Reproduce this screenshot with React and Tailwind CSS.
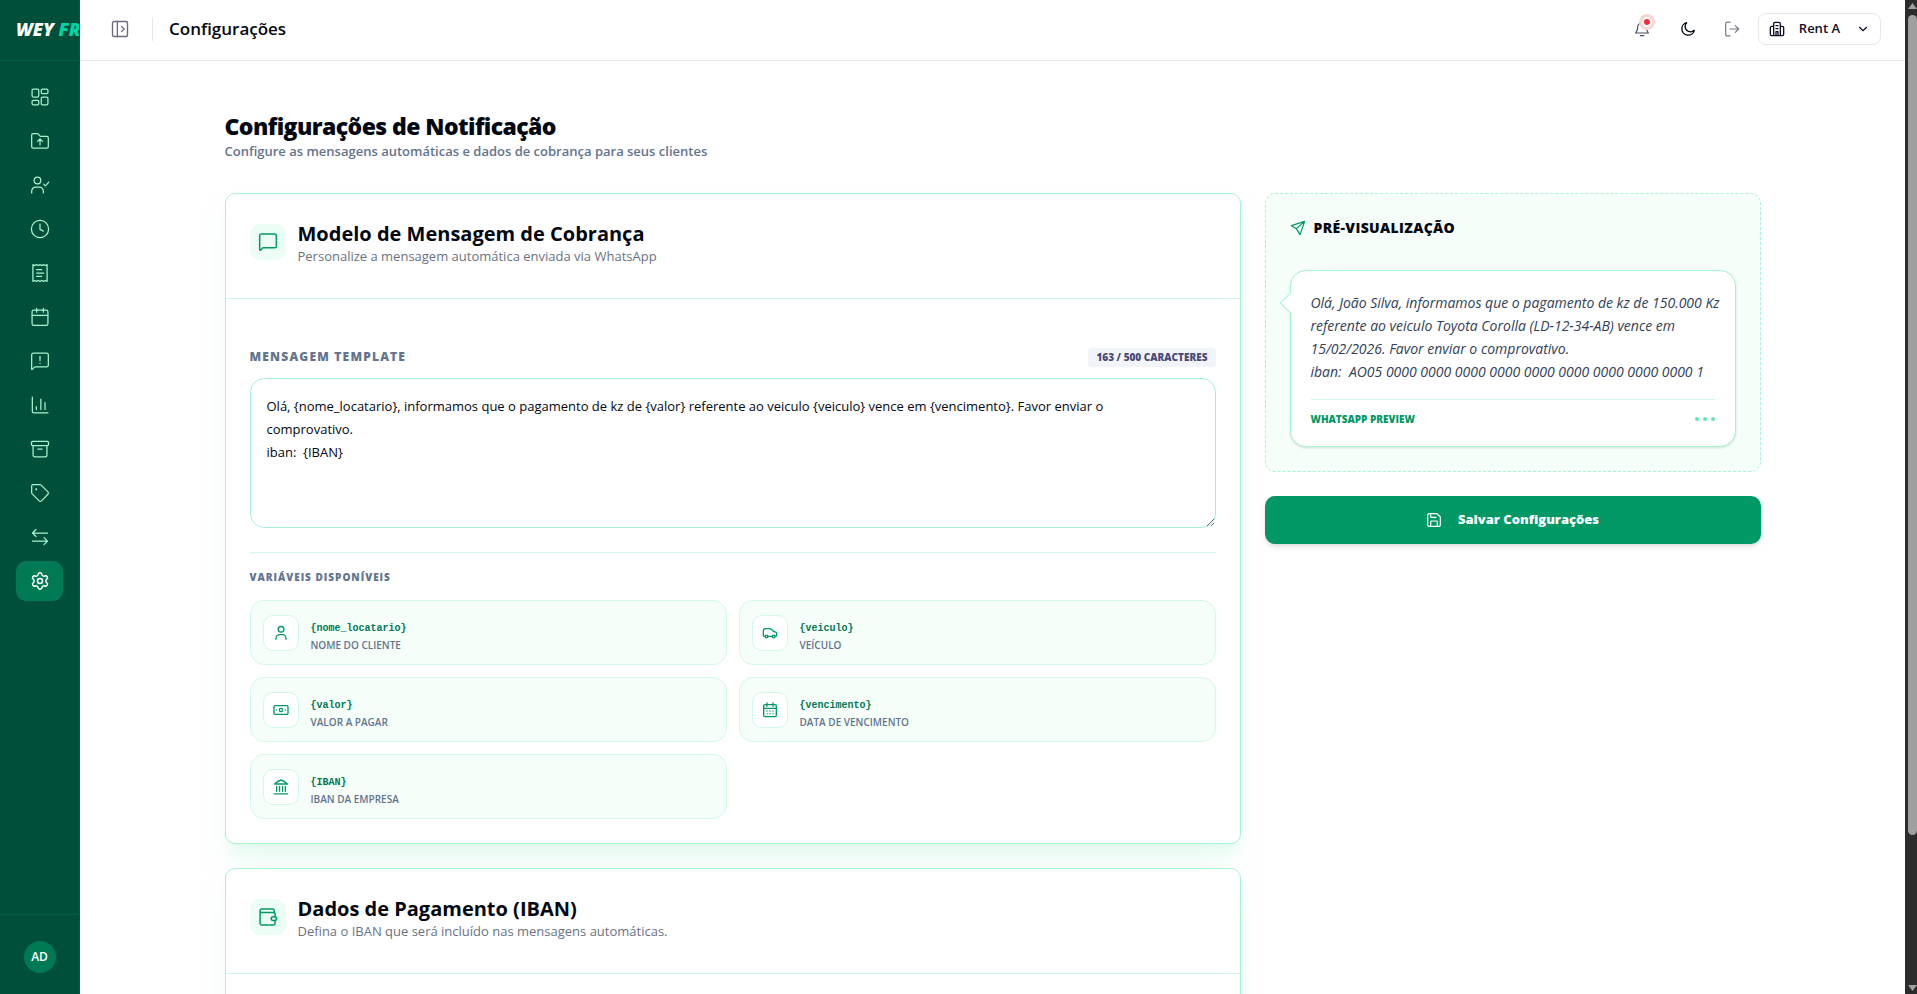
import React, { useState } from "react";
import { Settings, ChevronDown } from "lucide-react";

function Icon({ size = 20, stroke = 1.5, className = "", children }) {
  return (
    <svg
      width={size}
      height={size}
      viewBox="0 0 24 24"
      fill="none"
      stroke="currentColor"
      strokeWidth={stroke}
      strokeLinecap="round"
      strokeLinejoin="round"
      className={"shrink-0 " + className}
      aria-hidden="true"
    >
      {children}
    </svg>
  );
}

const dashboard = (
  <>
    <rect x="2.5" y="2.5" width="8" height="9.5" rx="1.4" />
    <rect x="13.5" y="2.5" width="8" height="5.5" rx="1.4" />
    <rect x="2.5" y="16" width="8" height="5.5" rx="1.4" />
    <rect x="13.5" y="12" width="8" height="9.5" rx="1.4" />
  </>
);
const folderUp = (
  <>
    <path d="M2 18.500V5a2 2 0 0 1 2-2h4.600a2 2 0 0 1 1.600.8L11.600 5.700a2 2 0 0 0 1.600.8H20a2 2 0 0 1 2 2v10a2 2 0 0 1-2 2H4a2 2 0 0 1-2-2Z" />
    <path d="M12 16.500v-6M9 12.500l3-3 3 3" />
  </>
);
const userCheck = (
  <>
    <circle cx="9" cy="6.500" r="4" />
    <path d="M2 21.500V19.500a5 5 0 0 1 5-5h4a5 5 0 0 1 5 5v2M16.500 11l2 2 4-4.500" />
  </>
);
const clock = (
  <>
    <circle cx="12" cy="12" r="10.300" />
    <path d="M12 6v6.500l4 2" />
  </>
);
const receipt = (
  <>
    <path d="M3.500 2l2.100 1 2.150-1 2.150 1L12 2l2.100 1 2.150-1 2.150 1 2.100-1v20l-2.100-1-2.150 1-2.150-1-2.100 1-2.100-1-2.150 1-2.150-1-2.100 1Z" />
    <path d="M8 8h6M8 12h8.500M8 16h6" />
  </>
);
const calendar = (
  <>
    <rect x="2.500" y="3.700" width="19" height="18.300" rx="2" />
    <path d="M8 1.700v4.500M16 1.700v4.500M2.500 10h19" />
  </>
);
const warning = (
  <>
    <path d="M2 22V4.500a2 2 0 0 1 2-2h16a2 2 0 0 1 2 2V17a2 2 0 0 1-2 2H6.500a2 2 0 0 0-1.500.7L3.200 21.700Q2.500 22.300 2 22Z" />
    <path d="M12 6.500v5M12 14.800v.1" />
  </>
);
const chart = <path d="M2.800 2.500v17a2 2 0 0 0 2 2h16.700M7.600 14v3.500M13 5v12.500M18 9v8.500" />;
const archive = (
  <>
    <rect x="1.800" y="2.800" width="20.400" height="5.200" rx="1.300" />
    <path d="M3.700 8v11.500a2 2 0 0 0 2 2h12.600a2 2 0 0 0 2-2V8M9.500 12h5" />
  </>
);
const tag = (
  <>
    <path d="M2 4a2 2 0 0 1 2-2h8a2 2 0 0 1 1.400.6l8.100 8.100a2 2 0 0 1 0 2.800l-7.700 7.900a2 2 0 0 1-2.800 0L2.600 13A2 2 0 0 1 2 11.600Z" />
    <path d="M7.500 7.500v.1" strokeWidth="2.500" />
  </>
);
const transfer = <path d="M21 7.200H3.300M7.200 3L3 7.200l4.200 4.200M3 17h17.700M16.800 12.800L21 17l-4.200 4.200" />;
const message = (
  <path d="M2 21.500V4.500a2 2 0 0 1 2-2h16a2 2 0 0 1 2 2V17a2 2 0 0 1-2 2H6.500a2 2 0 0 0-1.500.7L3.200 21.500Q2.500 22.200 2 21.500Z" />
);
const wallet = (
  <>
    <path d="M20.500 11.500V8.500a2 2 0 0 0-2-2H4.500a2 2 0 0 1 0-4H17.500a2 2 0 0 1 2 2V6.700M2.500 4.500v15a2 2 0 0 0 2 2h14a2 2 0 0 0 2-2V16.200" />
    <rect x="15.800" y="11.600" width="6.500" height="4.600" rx="2.300" />
  </>
);
const user = (
  <>
    <circle cx="12" cy="6.500" r="4.300" />
    <path d="M4.500 21.500V20a5.500 5.500 0 0 1 5.500-5.500h4A5.500 5.500 0 0 1 19.500 20v1.500" />
  </>
);
const car = (
  <>
    <path d="M4.500 17H3.500a1.500 1.500 0 0 1-1.500-1.500V9a3.500 3.500 0 0 1 3.500-3.500h5.600a5 5 0 0 1 3.300 1.200L18 10l2.500.7a2 2 0 0 1 1.500 2V15.500a1.500 1.500 0 0 1-1.500 1.500H20M9 17h6.500" />
    <circle cx="6.800" cy="17.200" r="2" />
    <circle cx="17.500" cy="17.200" r="2" />
  </>
);
const banknote = (
  <>
    <rect x="1.500" y="5.500" width="21" height="13" rx="1.500" />
    <circle cx="12" cy="12" r="2.500" />
    <path d="M5.500 12v.1M18.500 12v.1" />
  </>
);
const dueDate = (
  <>
    <rect x="2.500" y="4" width="19" height="18" rx="2" />
    <path d="M7.500 1.500v5M16.500 1.500v5M2.500 9.500h19M7.500 13.500h.1M12 13.500h.1M16.500 13.500h.1M7.500 17.500h.1M12 17.500h.1M16.500 17.500h.1" />
  </>
);
const bank = (
  <path d="M2.500 7.500Q7 3 12 1.500 17 3 21.500 7.500ZM5.500 11v7.500M9.800 11v7.500M14.200 11v7.500M18.500 11v7.500M2 22.300h20" />
);
const send = <path d="M22 2L2 8.500l7.500 4.500L15 22 22 2ZM9.500 13 22 2" />;

const NAV = [
  ["Painel", dashboard],
  ["Pastas", folderUp],
  ["Clientes", userCheck],
  ["Histórico", clock],
  ["Recibos", receipt],
  ["Agenda", calendar],
  ["Alertas", warning],
  ["Relatórios", chart],
  ["Arquivo", archive],
  ["Etiquetas", tag],
  ["Transferências", transfer],
];

const VARIABLES = [
  ["{nome_locatario}", "Nome do cliente", user],
  ["{veiculo}", "Veículo", car],
  ["{valor}", "Valor a pagar", banknote],
  ["{vencimento}", "Data de vencimento", dueDate],
  ["{IBAN}", "IBAN da empresa", bank],
];

const TEMPLATE =
  "Olá, {nome_locatario}, informamos que o pagamento de kz de {valor} referente ao veiculo {veiculo} vence em {vencimento}. Favor enviar o comprovativo.\niban:  {IBAN}";

function Sidebar() {
  return (
    <aside className="flex w-20 shrink-0 flex-col border-r border-[#005a42] bg-[#004f3b]">
      <div className="flex h-[61px] items-center overflow-hidden border-b border-[#006045] pb-0.5 pl-4">
        <span className="text-lg font-extrabold whitespace-nowrap text-white italic">
          WEY <span className="text-[#00d5a5]">FR</span>
        </span>
      </div>
      <nav className="flex flex-1 flex-col gap-1 px-4 pt-4" aria-label="Principal">
        {NAV.map(([label, shape]) => (
          <a key={label} href="#" aria-label={label} className="flex h-10 items-center justify-center text-[#a4f4cf]">
            <Icon>{shape}</Icon>
          </a>
        ))}
        <a
          href="#"
          aria-label="Configurações"
          className="flex h-10 items-center justify-center rounded-[10px] bg-[#007a55] text-white"
        >
          <Settings size={20} strokeWidth={1.8} />
        </a>
      </nav>
      <div className="flex h-20 items-center justify-center border-t border-[#006045] pt-1">
        <button className="flex size-8 items-center justify-center rounded-full bg-[#007a55] text-xs font-semibold text-white">
          AD
        </button>
      </div>
    </aside>
  );
}

function Header() {
  return (
    <header className="flex h-[61px] shrink-0 items-center border-b border-gray-200 pr-6 pb-0.5 pl-[31px]">
      <button aria-label="Alternar menu" className="text-[#6c6880]">
        <Icon size={18} stroke={1.8}>
          <rect x="2" y="2" width="20" height="20" rx="2" />
          <path d="M8.500 2v20M14 8.500l3.500 3.500-3.500 3.500" />
        </Icon>
      </button>
      <span className="mx-4 ml-[23px] h-6 w-px bg-gray-200" />
      <span className="text-[17px] font-semibold text-[#030712]">Configurações</span>
      <div className="ml-auto flex items-center">
        <button aria-label="Notificações" className="relative mr-[30px] text-[#4a4866]">
          <Icon size={16} stroke={1.8}>
            <path d="M4.500 14.500Q5.500 12 5.500 9.500a6.500 6.500 0 0 1 13 0Q18.500 13 21.500 18H2.500L4.500 14.500M9.500 22h5" />
          </Icon>
          <span className="absolute -top-[7px] left-[5px] flex size-4 items-center justify-center rounded-full bg-[#fdd5cf]">
            <span className="size-[10px] rounded-full border-2 border-white bg-[#fb2c36]" />
          </span>
        </button>
        <button aria-label="Tema escuro" className="mr-7 text-[#030712]">
          <Icon size={16} stroke={2}>
            <path d="M21.500 14A9.500 9.500 0 1 1 10 2.500a8 8 0 0 0 11.500 11.500Z" />
          </Icon>
        </button>
        <button aria-label="Sair" className="mr-[18px] text-[#777683]">
          <Icon size={16} stroke={1.8}>
            <path d="M9 1.800H4.500a2 2 0 0 0-2 2v16.400a2 2 0 0 0 2 2H9M9 12h13M17 7l5 5-5 5" />
          </Icon>
        </button>
        <button className="flex h-8 items-center rounded-lg border border-gray-200 px-[10px] text-[13px] font-semibold text-[#0f0f2a]">
          <Icon size={16} stroke={2}>
            <path d="M7 22V4a2 2 0 0 1 2-2h6a2 2 0 0 1 2 2v18M7 8H4a2 2 0 0 0-2 2v10a2 2 0 0 0 2 2h16a2 2 0 0 0 2-2V10a2 2 0 0 0-2-2h-3M10.500 7h3M10.500 11.500h3M10.500 22v-6h3v6" />
          </Icon>
          <span className="mr-4 ml-3.5">Rent A</span>
          <ChevronDown size={14} />
        </button>
      </div>
    </header>
  );
}

function CardHeader({ icon, title, text }) {
  return (
    <div className="flex h-[105px] items-start gap-3 border-b border-[#d0fae5] px-6 pt-7">
      <span className="mt-0.5 flex size-9 items-center justify-center rounded-[10px] bg-[#ecfdf5] text-[#009966]">
        <Icon size={20} stroke={1.8}>
          {icon}
        </Icon>
      </span>
      <div>
        <h2 className="text-xl leading-6 font-bold text-[#030712]">{title}</h2>
        <p className="text-[13px] leading-5 text-gray-500">{text}</p>
      </div>
    </div>
  );
}

export default function App() {
  const [template, setTemplate] = useState(TEMPLATE);
  return (
    <div className="flex h-screen overflow-hidden bg-white font-['Open_Sans','Noto_Sans',sans-serif] text-[#030712]">
      <Sidebar />
      <div className="flex min-w-0 flex-1 flex-col">
        <Header />
        <main className="flex-1 overflow-hidden px-8 pt-[50px]">
          <div className="mx-auto max-w-[1536px]">
            <h1 className="text-[23px] leading-[30px] font-extrabold tracking-tight">Configurações de Notificação</h1>
            <p className="text-[13px] leading-5 font-semibold text-[#62748e]">
              Configure as mensagens automáticas e dados de cobrança para seus clientes
            </p>
            <div className="mt-8 grid grid-cols-3 items-start gap-6">
              <div className="col-span-2 flex flex-col gap-6">
                <section className="rounded-[10px] border border-[#a4f4cf] bg-white shadow-[0_20px_25px_-5px_#d0fae580,0_8px_10px_-6px_#d0fae580]">
                  <CardHeader
                    icon={message}
                    title="Modelo de Mensagem de Cobrança"
                    text="Personalize a mensagem automática enviada via WhatsApp"
                  />
                  <div className="px-6 pt-12 pb-6">
                    <div className="mb-[11px] flex h-5 items-center justify-between">
                      <label
                        htmlFor="template"
                        className="text-xs font-extrabold tracking-widest text-[#62748e] uppercase"
                      >
                        Mensagem template
                      </label>
                      <span className="rounded bg-[#f1f5f9] px-2 text-[10px] leading-[19px] font-extrabold text-[#4a4a78]">
                        {template.length} / 500 CARACTERES
                      </span>
                    </div>
                    <textarea
                      id="template"
                      value={template}
                      onChange={(e) => setTemplate(e.target.value)}
                      className="block h-[150px] w-full rounded-[14px] border border-[#a4f4cf] bg-white py-4 pr-8 pl-4 text-[13px] leading-[23px] outline-none"
                    />
                    <div className="mt-6 border-t border-[#d0fae5] pt-4">
                      <h3 className="mb-[15px] text-[10px] leading-4 font-extrabold tracking-widest text-[#62748e] uppercase">
                        Variáveis disponíveis
                      </h3>
                      <div className="grid grid-cols-2 gap-3">
                        {VARIABLES.map(([code, label, shape]) => (
                          <button
                            key={code}
                            className="flex h-[65px] items-center gap-3 rounded-[14px] border border-[#d0fae5] bg-[#f6fefa] px-3 text-left"
                          >
                            <span className="flex size-9 items-center justify-center rounded-[10px] border border-[#d0fae5] bg-white text-[#009966]">
                              <Icon size={16} stroke={2}>
                                {shape}
                              </Icon>
                            </span>
                            <span className="flex flex-col pt-2">
                              <code className="font-['Liberation_Mono',monospace] text-[10px] leading-4 font-bold text-[#007a55]">
                                {code}
                              </code>
                              <span className="text-[10px] leading-4 font-semibold text-[#62748e] uppercase">{label}</span>
                            </span>
                          </button>
                        ))}
                      </div>
                    </div>
                  </div>
                </section>
                <section className="rounded-[10px] border border-[#a4f4cf] bg-white shadow-[0_20px_25px_-5px_#d0fae580,0_8px_10px_-6px_#d0fae580]">
                  <CardHeader
                    icon={wallet}
                    title="Dados de Pagamento (IBAN)"
                    text="Defina o IBAN que será incluído nas mensagens automáticas."
                  />
                  <div className="h-40" />
                </section>
              </div>

              <div className="flex flex-col gap-6">
                <section className="rounded-[10px] border border-dashed border-[#a4f4cf] bg-[#f6fefa] p-6">
                  <h2 className="mb-8 flex h-5 items-center gap-2 text-sm font-extrabold tracking-wide uppercase">
                    <Icon size={16} stroke={1.8} className="text-[#009966]">
                      {send}
                    </Icon>
                    Pré-visualização
                  </h2>
                  <div className="relative rounded-2xl border border-[#a4f4cf] bg-white px-5 py-5 shadow-sm">
                    <span className="absolute top-6 -left-2 size-4 rotate-45 border-b border-l border-[#a4f4cf] bg-white" />
                    <p className="relative -mr-2 text-sm leading-[23px] whitespace-pre-wrap text-[#314158] italic">
                      {
                        "Olá, João Silva, informamos que o pagamento de kz de 150.000 Kz referente ao veiculo Toyota Corolla (LD-12-34-AB) vence em 15/02/2026. Favor enviar o comprovativo.\niban:  AO05 0000 0000 0000 0000 0000 0000 0000 0000 0000 1"
                      }
                    </p>
                    <div className="mt-4 flex items-center justify-between border-t border-[#d0fae5] pt-3">
                      <span className="text-[10px] leading-[14px] font-extrabold text-[#009966]">WHATSAPP PREVIEW</span>
                      <span className="flex gap-1">
                        <span className="size-1 rounded-full bg-[#5ee9b5]" />
                        <span className="size-1 rounded-full bg-[#5ee9b5]" />
                        <span className="size-1 rounded-full bg-[#5ee9b5]" />
                      </span>
                    </div>
                  </div>
                </section>
                <button className="flex h-12 items-center justify-center gap-4 rounded-[10px] bg-[#009966] text-[13px] font-extrabold text-white shadow-md">
                  <Icon size={16} stroke={1.8}>
                    <path d="M2.500 4.500a2 2 0 0 1 2-2H16.500L21.500 7.500V19.500a2 2 0 0 1-2 2h-15a2 2 0 0 1-2-2ZM7 21.500V14.500a1 1 0 0 1 1-1h8a1 1 0 0 1 1 1v7M7 2.500V7a1 1 0 0 0 1 1h7" />
                  </Icon>
                  Salvar Configurações
                </button>
              </div>
            </div>
          </div>
        </main>
      </div>
      <div className="flex w-3 shrink-0 flex-col items-center bg-[#2c2c2c] py-[3px] pl-[3px]" aria-hidden="true">
        <svg width="9" height="6" viewBox="0 0 9 6" fill="#9f9f9f">
          <path d="M4.500 0 9 6H0Z" />
        </svg>
        <div className="mt-[6px] h-[83%] w-[9px] rounded-full bg-[#9f9f9f]" />
        <svg width="9" height="6" viewBox="0 0 9 6" fill="#9f9f9f" className="mt-auto">
          <path d="M4.500 6 9 0H0Z" />
        </svg>
      </div>
    </div>
  );
}
